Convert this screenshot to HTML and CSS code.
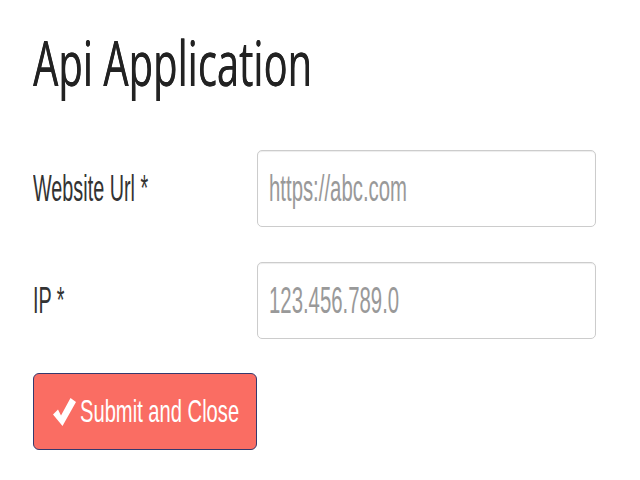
FILE: index.html
```html
<!DOCTYPE html>
<html lang="en">
<head>
<meta charset="utf-8">
<title>Api Application</title>
<link rel="stylesheet" href="styles.css">
</head>
<body>
<main class="page">
  <h1 class="title"><span class="squeeze title-text">Api Application</span></h1>
  <form class="form">
    <div class="row">
      <label class="label"><span class="squeeze">Website Url *</span></label>
      <div class="input"><span class="squeeze ph">https://abc.com</span></div>
    </div>
    <div class="row">
      <label class="label"><span class="squeeze">IP *</span></label>
      <div class="input"><span class="squeeze ph">123.456.789.0</span></div>
    </div>
    <div class="actions">
      <button type="button" class="btn">
        <svg class="check" width="23" height="28" viewBox="0 0 23 28" aria-hidden="true"><polygon points="0,16.5 5,11.5 8,17.5 17.5,0 23,4 9.5,28" fill="#fff"/></svg>
        <span class="squeeze btn-text">Submit and Close</span>
      </button>
    </div>
  </form>
</main>
</body>
</html>
```
FILE: styles.css
```css
html, body {
  margin: 0;
  padding: 0;
  background: #ffffff;
}
.page {
  padding: 0 33px;
}
.squeeze {
  display: inline-block;
  white-space: nowrap;
  transform-origin: left center;
}
.title {
  margin: 30px 0 0 0;
  font-family: "Open Sans", sans-serif;
  font-weight: 400;
  font-size: 63px;
  line-height: 63px;
  color: #222222;
  text-shadow: 0.4px 0 0 #222222;
}
.title-text {
  transform: scaleX(0.635);
}
.form {
  margin-top: 57px;
  display: flex;
  flex-direction: column;
  gap: 35px;
}
.row {
  display: flex;
  align-items: center;
}
.label {
  width: 224px;
  font-family: "Liberation Sans", Arial, sans-serif;
  font-size: 36px;
  color: #333333;
}
.label .squeeze {
  transform: scaleX(0.55);
}
.input {
  box-sizing: border-box;
  width: 339px;
  height: 77px;
  border: 1px solid #cccccc;
  border-radius: 5px;
  box-shadow: inset 0 1px 1px rgba(0,0,0,0.075);
  display: flex;
  align-items: center;
  padding-left: 11px;
  font-family: "Liberation Sans", Arial, sans-serif;
  font-size: 37px;
  color: #999999;
  overflow: hidden;
}
.ph {
  transform: scaleX(0.55);
}
.actions {
  margin-top: -1px;
}
.btn {
  box-sizing: border-box;
  width: 224px;
  height: 77px;
  background: #fa6d63;
  border: 1px solid #34396e;
  border-radius: 6px;
  display: flex;
  align-items: center;
  padding: 0 0 0 19px;
  gap: 4px;
  font-family: "Liberation Sans", Arial, sans-serif;
  font-size: 32px;
  color: #ffffff;
  cursor: pointer;
  overflow: hidden;
}
.check {
  flex: none;
}
.btn-text {
  transform: scaleX(0.63);
}
```
